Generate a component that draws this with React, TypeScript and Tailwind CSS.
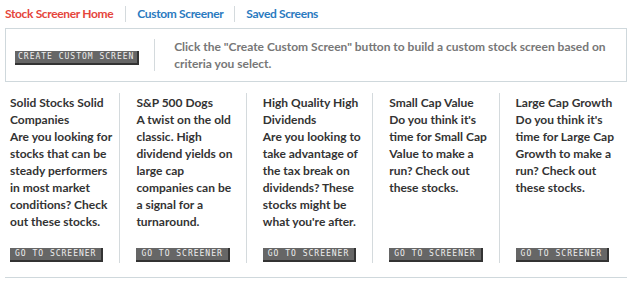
const screens = [
  {
    title: "Solid Stocks Solid Companies",
    text: "Are you looking for stocks that can be steady performers in most market conditions? Check out these stocks.",
  },
  {
    title: "S&P 500 Dogs",
    text: "A twist on the old classic. High dividend yields on large cap companies can be a signal for a turnaround.",
  },
  {
    title: "High Quality High Dividends",
    text: "Are you looking to take advantage of the tax break on dividends? These stocks might be what you're after.",
  },
  {
    title: "Small Cap Value",
    text: "Do you think it's time for Small Cap Value to make a run? Check out these stocks.",
  },
  {
    title: "Large Cap Growth",
    text: "Do you think it's time for Large Cap Growth to make a run? Check out these stocks.",
  },
];

const PixelButton = ({ label, className = "px-[5px]" }: { label: string; className?: string }) => (
  <button
    type="button"
    className={
      "bg-[#666] text-[#eee] border-r-2 border-b-2 border-[#333] h-[14px] text-[8px] leading-[12px] tracking-[1px] uppercase font-['DejaVu_Sans_Mono',monospace] font-normal whitespace-nowrap " +
      className
    }
  >
    {label}
  </button>
);

export default function App() {
  return (
    <div className="w-[632px] h-[286px] bg-white font-['Lato',sans-serif] text-[12px] font-bold">
      <nav className="flex items-center h-[28px] px-[5px] tracking-[-0.35px]">
        <a className="text-[#e5453c] pr-[12px]">Stock Screener Home</a>
        <span className="w-px h-[16px] bg-[#d4dadd]" />
        <a className="text-[#2a7ac0] px-[11px]">Custom Screener</a>
        <span className="w-px h-[16px] bg-[#d4dadd]" />
        <a className="text-[#2a7ac0] px-[11px]">Saved Screens</a>
      </nav>

      <div className="mx-[5px] h-[54px] border border-[#cfd8dc] flex items-center">
        <div className="pl-[9px] pr-[15px]">
          <PixelButton label="Create Custom Screen" className="px-[3px] tracking-[0.8px]" />
        </div>
        <span className="w-px h-[32px] bg-[#d4dadd]" />
        <p className="pl-[19px] pr-[10px] text-[#777] leading-[17px]">
          Click the "Create Custom Screen" button to build a custom stock screen based on criteria you select.
        </p>
      </div>

      <div className="grid grid-cols-5 mt-[11px]">
        {screens.map((s, i) => (
          <div key={s.title} className="pl-[10px] pr-[6px]">
            <div
              className={
                "flex flex-col h-[170px] pr-[6px] " + (i < 4 ? "border-r border-[#d4dadd]" : "")
              }
            >
              <div className="text-[#333] leading-[17px] pt-[1px]">
                <div>{s.title}</div>
                <div>{s.text}</div>
              </div>
              <div className="mt-auto mb-[1px]">
                <PixelButton label="Go to screener" />
              </div>
            </div>
          </div>
        ))}
      </div>

      <div className="mx-[5px] mt-[14px] border-t border-[#cfd8dc]" />
    </div>
  );
}
